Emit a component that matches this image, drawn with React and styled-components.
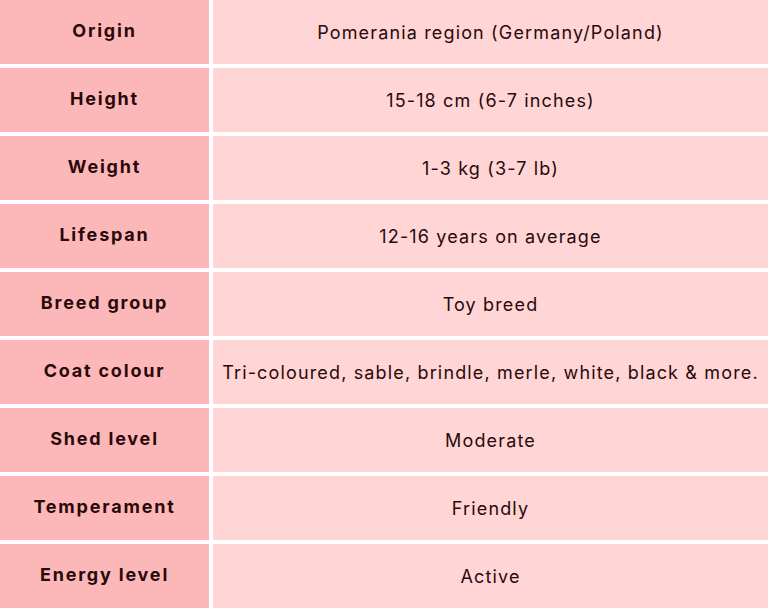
import React from "react";
import styled, { createGlobalStyle } from "styled-components";

const GlobalStyle = createGlobalStyle`
  html, body {
    margin: 0;
    padding: 0;
    background: #fff;
  }
  body {
    font-family: "Inter", "Liberation Sans", sans-serif;
    color: #2a090b;
  }
`;

const Table = styled.div`
  display: grid;
  grid-template-columns: 209px 1fr;
  grid-auto-rows: 64px;
  column-gap: 4px;
  row-gap: 4px;
  width: 768px;
  background: #fff;
`;

const Cell = styled.div`
  display: flex;
  align-items: center;
  justify-content: center;
  text-align: center;
  font-size: 18px;
  white-space: nowrap;
  background: #ffd5d5;
  font-weight: 400;
  letter-spacing: 1.15px;
  padding-top: 1px;
`;

const Label = styled(Cell)`
  background: #fcb8b8;
  font-weight: 700;
  letter-spacing: 1.8px;
  padding-top: 0;
  padding-bottom: 3px;
`;

const rows = [
  ["Origin", "Pomerania region (Germany/Poland)"],
  ["Height", "15-18 cm (6-7 inches)"],
  ["Weight", "1-3 kg (3-7 lb)"],
  ["Lifespan", "12-16 years on average"],
  ["Breed group", "Toy breed"],
  ["Coat colour", "Tri-coloured, sable, brindle, merle, white, black & more."],
  ["Shed level", "Moderate"],
  ["Temperament", "Friendly"],
  ["Energy level", "Active"],
];

const App = () => {
  return (
    <>
      <GlobalStyle />
      <Table>
        {rows.map(([label, value]) => (
          <React.Fragment key={label}>
            <Label>{label}</Label>
            <Cell>{value}</Cell>
          </React.Fragment>
        ))}
      </Table>
    </>
  );
};

export default App;
